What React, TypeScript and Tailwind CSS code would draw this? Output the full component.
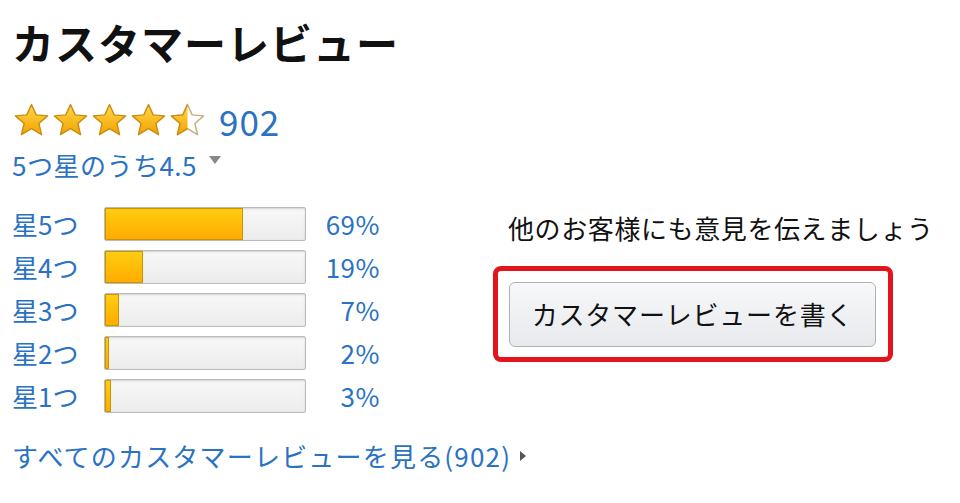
import React from 'react';

const FONT = { fontFamily: '"Noto Sans CJK JP", "Noto Sans", "Liberation Sans", sans-serif' };

const rows = [
  { label: '星5つ', pct: 69 },
  { label: '星4つ', pct: 19 },
  { label: '星3つ', pct: 7 },
  { label: '星2つ', pct: 2 },
  { label: '星1つ', pct: 3 },
];

const STAR = 'M19.5 2.5l4.7 10.4 11.4 1-8.7 7.6 2.7 11.2-10.1-6-10.1 6 2.7-11.2-8.7-7.6 11.4-1z';

const Star = ({ half = false, id }: { half?: boolean; id: string }) => (
  <svg width="39" height="36" viewBox="0 0 39 36">
    <defs>
      <linearGradient id={`g-${id}`} x1="0" y1="0" x2="0" y2="1">
        <stop offset="0" stopColor="#ffd84a" />
        <stop offset="1" stopColor="#f3a200" />
      </linearGradient>
      <clipPath id={`c-${id}`}>
        <rect x="0" y="0" width="19.5" height="36" />
      </clipPath>
    </defs>
    {half && <path d={STAR} fill="#fff" stroke="#c9ab78" strokeWidth="1.4" strokeLinejoin="round" />}
    <path
      d={STAR}
      fill={`url(#g-${id})`}
      stroke="#c98d10"
      strokeWidth="1.4"
      strokeLinejoin="round"
      clipPath={half ? `url(#c-${id})` : undefined}
    />
  </svg>
);

export default function App() {
  return (
    <div className="w-[960px] h-[503px] bg-white overflow-hidden pl-[12px] pt-[15px]" style={FONT}>
      <h1 className="text-[42px] leading-[54px] font-bold tracking-[1px] text-[#111]">カスタマーレビュー</h1>

      {/* rating summary */}
      <div className="flex items-center mt-[33px] h-[36px]">
        <div className="flex">
          {[0, 1, 2, 3].map(i => <Star key={i} id={`s${i}`} />)}
          <Star half id="s4" />
        </div>
        <span className="ml-[12px] text-[35px] leading-none tracking-[1px] text-[#2a72c2]">902</span>
      </div>
      <div className="flex items-center mt-[10px] h-[34px]">
        <span className="text-[26px] leading-none tracking-[0.5px] text-[#2a72c2]">5つ星のうち4.5</span>
        <svg width="12" height="8" viewBox="0 0 12 8" className="ml-[12px] mb-[10px]">
          <path d="M0 0h12L6 8z" fill="#888" />
        </svg>
      </div>

      <div className="flex mt-[25px]">
        {/* histogram */}
        <div className="flex flex-col gap-[9px] w-[368px]">
          {rows.map(r => (
            <div key={r.label} className="flex items-center h-[34px]">
              <span className="w-[92px] text-[26px] leading-none text-[#2a72c2]">{r.label}</span>
              <div className="w-[202px] h-[34px] border border-[#bbb] bg-gradient-to-b from-[#f8f8f8] to-[#ececec] shadow-[inset_0_1px_2px_rgba(0,0,0,0.15)] rounded-[2px] overflow-hidden">
                <div
                  className="h-full border border-[#c99500] bg-gradient-to-b from-[#ffcc10] to-[#ffac00]"
                  style={{ width: `${r.pct}%` }}
                />
              </div>
              <span className="flex-1 text-right text-[26px] leading-none tracking-[0.5px] text-[#2a72c2]">{r.pct}%</span>
            </div>
          ))}
        </div>

        {/* write review */}
        <div className="ml-[128px] flex flex-col">
          <p className="text-[26px] leading-[40px] tracking-[0.6px] text-[#111] mt-[1px]">他のお客様にも意見を伝えましょう</p>
          <div className="mt-[18px] -ml-[15px] w-[400px] h-[96px] border-[5px] border-[#e3141c] rounded-[8px] flex items-center pl-[11px]">
            <button
              type="button"
              className="w-[367px] h-[65px] rounded-[6px] border border-[#adb1b8] bg-gradient-to-b from-[#f7f8fa] to-[#e7e9ec] shadow-[0_1px_0_rgba(255,255,255,0.6)_inset] text-[26px] tracking-[0.8px] text-[#111] leading-none"
            >
              カスタマーレビューを書く
            </button>
          </div>
        </div>
      </div>

      <div className="flex items-center mt-[30px]">
        <span className="text-[26px] leading-none tracking-[1.2px] text-[#2a72c2]">すべてのカスタマーレビューを見る(902)</span>
        <svg width="6" height="10" viewBox="0 0 6 10" className="ml-[9px]">
          <path d="M0 0l6 5-6 5z" fill="#555" />
        </svg>
      </div>
    </div>
  );
}
